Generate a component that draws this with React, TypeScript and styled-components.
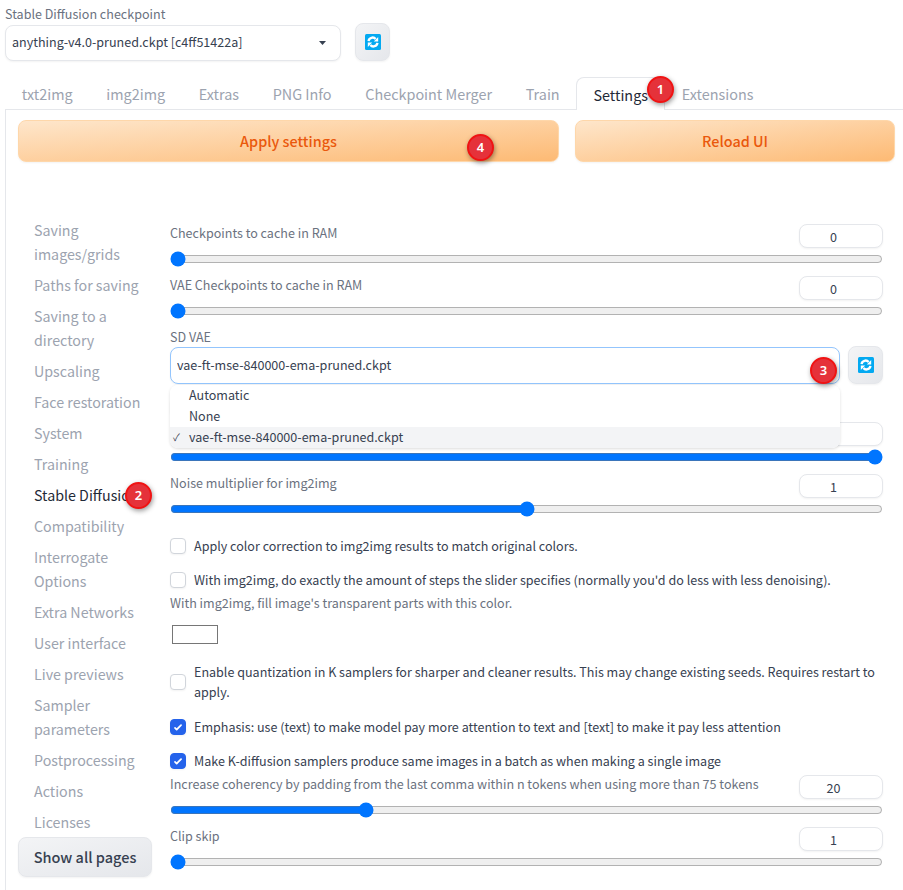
import {FunctionComponent} from 'react'
import styled, {createGlobalStyle} from 'styled-components'

const GlobalStyle = createGlobalStyle`
    html, body {
        margin: 0;
        height: 890px;
        overflow: hidden;
        background: #fff;
    }

    * {
        box-sizing: border-box;
    }

    body {
        font-family: "Noto Sans CJK SC", "Noto Sans", sans-serif;
        font-size: 12.55px;
        color: #374151;
    }
`

const Page = styled.div`
    position: relative;
    width: 903px;
    height: 890px;
    overflow: hidden;
`

const Header = styled.div`
    display: flex;
    align-items: flex-end;
    gap: 14px;
    padding: 5px 0 0 5px;
    height: 61px;
`

const FieldLabel = styled.div`
    height: 20px;
    line-height: 18px;
    color: #6b7280;
`

const CheckpointSelect = styled.select`
    display: block;
    width: 336px;
    height: 36px;
    padding: 0 30px 2px 6px;
    appearance: none;
    border: 1px solid #e5e7eb;
    border-radius: 8px;
    font: inherit;
    line-height: 20px;
    color: #374151;
    box-shadow: 0 1px 2px rgba(0, 0, 0, .05);
    background: #fff url("data:image/svg+xml,%3Csvg xmlns='http://www.w3.org/2000/svg' width='7' height='4'%3E%3Cpath d='M0 0h7L3.5 4z' fill='%23374151'/%3E%3C/svg%3E") no-repeat right 14px center;
`

const RefreshButton = styled.button`
    display: flex;
    align-items: center;
    justify-content: center;
    flex: none;
    width: 35px;
    height: 38px;
    padding: 0;
    border: 1px solid #e5e7eb;
    border-radius: 8px;
    background: linear-gradient(to bottom right, #f3f4f6, #e5e7eb);
    box-shadow: 0 1px 2px rgba(0, 0, 0, .05);
`

const TabBar = styled.div`
    display: flex;
    height: 49px;
    margin-left: 5px;
    padding: 16px 0 0 0;
    border-bottom: 1px solid #e5e7eb;
`

const Tab = styled.div<{ $active?: boolean }>`
    height: ${p => p.$active ? '33px' : '32px'};
    padding: 0 ${p => p.$active ? '16px' : '16.85px'};
    line-height: ${p => p.$active ? '33px' : '34px'};
    font-size: 14.4px;
    color: ${p => p.$active ? '#1f2937' : '#9ca3af'};
    background: #fff;
    white-space: nowrap;
    ${p => p.$active && `
        border: 1px solid #e5e7eb;
        border-bottom: none;
        border-radius: 8px 8px 0 0;
    `}
`

const Panel = styled.div`
    margin-left: 5px;
    padding: 10px 8px 0 12px;
    border-left: 1px solid #e5e7eb;
    height: 781px;
`

const ActionBar = styled.div`
    display: grid;
    grid-template-columns: 1fr 320px;
    gap: 16px;
`

const ActionButton = styled.button`
    height: 42px;
    padding: 0 0 2px;
    border: 1px solid #fed7aa;
    border-radius: 8px;
    background: linear-gradient(to bottom right, #fee6cb, #fdba74);
    color: #ea580c;
    font: inherit;
    font-size: 14.4px;
    font-weight: 500;
    box-shadow: 0 1px 2px rgba(0, 0, 0, .05);
`

const SettingsArea = styled.div`
    display: flex;
    gap: 18px;
    margin-top: 56px;
`

const Sidebar = styled.div`
    flex: none;
    width: 134px;
`

const SideList = styled.div`
    display: flex;
    flex-direction: column;
    gap: 7px;
    padding-left: 16px;
`

const SideItem = styled.div<{ $active?: boolean }>`
    line-height: 24px;
    font-size: 14.25px;
    color: ${p => p.$active ? '#1f2937' : '#9ca3af'};
    white-space: pre-line;
`

const ShowAllButton = styled.button`
    display: block;
    width: 134px;
    height: 40px;
    margin-top: 3px;
    padding: 0 0 2px;
    border: 1px solid #e5e7eb;
    border-radius: 8px;
    background: linear-gradient(to bottom right, #f3f4f6, #e5e7eb);
    color: #374151;
    font: inherit;
    font-size: 14.5px;
    font-weight: 500;
    box-shadow: 0 1px 2px rgba(0, 0, 0, .05);
`

const Content = styled.div`
    width: 713px;
    padding-top: 6px;
`

const SliderBlock = styled.div<{ $top?: number }>`
    margin-top: ${p => p.$top ?? 0}px;
`

const SliderHead = styled.div`
    display: flex;
    justify-content: space-between;
    align-items: flex-start;
    height: 27px;
`

const SliderLabel = styled.div`
    line-height: 18px;
    color: #6b7280;
    white-space: nowrap;
`

const NumberBox = styled.input`
    flex: none;
    width: 84px;
    height: 24px;
    padding: 0;
    border: 1px solid #e5e7eb;
    border-radius: 8px;
    background: #fff;
    text-align: center;
    font: inherit;
    color: #374151;
    box-shadow: 0 1px 2px rgba(0, 0, 0, .05);
`

const Slider = styled.input`
    display: block;
    width: 713px;
    height: 16px;
    margin: 0;
`

const VaeField = styled.div`
    position: relative;
    margin-top: 9px;
`

const VaeLabel = styled.div`
    height: 18px;
    line-height: 18px;
    color: #6b7280;
`

const VaeRow = styled.div`
    display: flex;
    align-items: flex-end;
    gap: 8px;
`

const VaeInput = styled.input`
    display: block;
    width: 670px;
    height: 37px;
    padding: 0 6px 2px;
    border: 1px solid #93c5fd;
    border-radius: 8px;
    font: inherit;
    color: #374151;
    outline: none;
    box-shadow: 0 1px 2px rgba(0, 0, 0, .05);
`

const DropdownMenu = styled.ul`
    position: absolute;
    z-index: 2;
    top: 57px;
    left: 0;
    width: 670px;
    margin: 0;
    padding: 0;
    list-style: none;
    background: #fff;
    border-radius: 8px;
    overflow: hidden;
    box-shadow: 0 1px 3px rgba(0, 0, 0, .14);
`

const DropdownItem = styled.li<{ $selected?: boolean }>`
    position: relative;
    height: 21px;
    padding-left: 19px;
    line-height: 20px;
    color: #374151;
    background: ${p => p.$selected ? '#f3f4f6' : '#fff'};
`

const CheckMark = styled.span`
    position: absolute;
    left: 3px;
    top: 0;
    font-size: 10px;
`

const CheckRow = styled.label<{ $top?: number }>`
    display: flex;
    align-items: center;
    gap: 8px;
    min-height: 20px;
    margin-top: ${p => p.$top ?? 0}px;
    line-height: 20px;
    color: #374151;
`

const CheckBox = styled.input`
    flex: none;
    width: 16px;
    height: 16px;
    margin: 0;
    appearance: none;
    background: #fff;
    border: 1px solid #d1d5db;
    border-radius: 4px;
    box-shadow: 0 1px 2px rgba(0, 0, 0, .05);

    &:checked {
        border-color: #2563eb;
        background: #2563eb url("data:image/svg+xml,%3Csvg xmlns='http://www.w3.org/2000/svg' viewBox='0 0 16 16'%3E%3Cpath d='M12.2 5.2a1 1 0 0 1 0 1.4l-5 5a1 1 0 0 1-1.4 0l-2-2a1 1 0 0 1 1.4-1.4l1.3 1.3 4.3-4.3a1 1 0 0 1 1.4 0z' fill='%23fff'/%3E%3C/svg%3E") center / 100% no-repeat;
    }
`

const ColorLabel = styled.div`
    height: 18px;
    margin-top: 4px;
    line-height: 18px;
    color: #6b7280;
`

const ColorSwatch = styled.div`
    width: 46px;
    height: 19px;
    margin: 13px 0 0 2px;
    border: 1px solid #767676;
    background: #fff;
`

const Badge = styled.div<{ $x: number, $y: number }>`
    position: absolute;
    z-index: 5;
    left: ${p => p.$x}px;
    top: ${p => p.$y}px;
    width: 27px;
    height: 27px;
    border: 2px solid #f01313;
    border-radius: 50%;
    background: #e5323a;
    color: #fff;
    font-family: "Noto Sans", sans-serif;
    font-size: 13px;
    font-weight: 600;
    line-height: 23px;
    text-align: center;
    box-shadow: 1px 2px 5px rgba(0, 0, 0, .4);
`

const RefreshIcon: FunctionComponent = () => (
    <svg width="16" height="16" viewBox="0 0 16 16">
        <rect width="16" height="16" rx="1.5" fill="#03a9f1"/>
        <g fill="none" stroke="#fff" strokeWidth="2.4">
            <path d="M3.6 7.2A4 4 0 0 1 10.6 5"/>
            <path d="M12.4 8.8A4 4 0 0 1 5.4 11"/>
        </g>
        <path d="M8.8 7.4h4.4V3z" fill="#fff"/>
        <path d="M7.2 8.6H2.8V13z" fill="#fff"/>
    </svg>
)

interface RangeRowProps {
    label?: string
    value: number
    min?: number
    max: number
    step?: number
    top?: number
}

const RangeRow: FunctionComponent<RangeRowProps> = ({label, value, min = 0, max, step = 1, top}) => (
    <SliderBlock $top={top}>
        <SliderHead>
            <SliderLabel>{label}</SliderLabel>
            <NumberBox type="number" readOnly min={min} max={max} step={step} value={value}/>
        </SliderHead>
        <Slider type="range" readOnly min={min} max={max} step={step} value={value}/>
    </SliderBlock>
)

const sideItems = [
    'Saving\nimages/grids',
    'Paths for saving',
    'Saving to a\ndirectory',
    'Upscaling',
    'Face restoration',
    'System',
    'Training',
    'Stable Diffusion',
    'Compatibility',
    'Interrogate\nOptions',
    'Extra Networks',
    'User interface',
    'Live previews',
    'Sampler\nparameters',
    'Postprocessing',
    'Actions',
    'Licenses',
]

const tabs = ['txt2img', 'img2img', 'Extras', 'PNG Info', 'Checkpoint Merger', 'Train', 'Settings', 'Extensions']

const App: FunctionComponent = () => {
    return (
        <Page>
            <GlobalStyle/>
            <Header>
                <div>
                    <FieldLabel>Stable Diffusion checkpoint</FieldLabel>
                    <CheckpointSelect defaultValue="anything">
                        <option value="anything">anything-v4.0-pruned.ckpt [c4ff51422a]</option>
                    </CheckpointSelect>
                </div>
                <RefreshButton><RefreshIcon/></RefreshButton>
            </Header>

            <TabBar>
                {tabs.map(tab => <Tab key={tab} $active={tab === 'Settings'}>{tab}</Tab>)}
            </TabBar>

            <Panel>
                <ActionBar>
                    <ActionButton>Apply settings</ActionButton>
                    <ActionButton>Reload UI</ActionButton>
                </ActionBar>

                <SettingsArea>
                    <Sidebar>
                        <SideList>
                            {sideItems.map(item => (
                                <SideItem key={item} $active={item === 'Stable Diffusion'}>{item}</SideItem>
                            ))}
                        </SideList>
                        <ShowAllButton>Show all pages</ShowAllButton>
                    </Sidebar>

                    <Content>
                        <RangeRow label="Checkpoints to cache in RAM" value={0} max={10}/>
                        <RangeRow label="VAE Checkpoints to cache in RAM" value={0} max={10} top={9}/>

                        <VaeField>
                            <VaeLabel>SD VAE</VaeLabel>
                            <VaeRow>
                                <VaeInput type="text" readOnly value="vae-ft-mse-840000-ema-pruned.ckpt"/>
                                <RefreshButton><RefreshIcon/></RefreshButton>
                            </VaeRow>
                            <DropdownMenu>
                                <DropdownItem>Automatic</DropdownItem>
                                <DropdownItem>None</DropdownItem>
                                <DropdownItem $selected><CheckMark>✓</CheckMark>vae-ft-mse-840000-ema-pruned.ckpt</DropdownItem>
                            </DropdownMenu>
                        </VaeField>

                        {/* these two rows sit behind the open dropdown, their labels can't be seen */}
                        <CheckRow $top={13}>
                            <CheckBox type="checkbox" readOnly checked/>
                        </CheckRow>
                        <RangeRow value={1} max={1} step={0.01} top={5}/>
                        <RangeRow label="Noise multiplier for img2img" value={1} min={0.5} max={1.5} step={0.01} top={9}/>

                        <CheckRow $top={19}>
                            <CheckBox type="checkbox" readOnly/>
                            Apply color correction to img2img results to match original colors.
                        </CheckRow>
                        <CheckRow $top={14}>
                            <CheckBox type="checkbox" readOnly/>
                            With img2img, do exactly the amount of steps the slider specifies (normally you'd do less with less denoising).
                        </CheckRow>
                        <ColorLabel>With img2img, fill image's transparent parts with this color.</ColorLabel>
                        <ColorSwatch/>
                        <CheckRow $top={18}>
                            <CheckBox type="checkbox" readOnly/>
                            Enable quantization in K samplers for sharper and cleaner results. This may change existing seeds. Requires restart to apply.
                        </CheckRow>
                        <CheckRow $top={15}>
                            <CheckBox type="checkbox" readOnly checked/>
                            Emphasis: use (text) to make model pay more attention to text and [text] to make it pay less attention
                        </CheckRow>
                        <CheckRow $top={14}>
                            <CheckBox type="checkbox" readOnly checked/>
                            Make K-diffusion samplers produce same images in a batch as when making a single image
                        </CheckRow>
                        <RangeRow label="Increase coherency by padding from the last comma within n tokens when using more than 75 tokens" value={20} max={74} top={4}/>
                        <RangeRow label="Clip skip" value={1} min={1} max={12} top={9}/>
                    </Content>
                </SettingsArea>
            </Panel>

            <Badge $x={647} $y={76}>1</Badge>
            <Badge $x={125} $y={482}>2</Badge>
            <Badge $x={810} $y={357}>3</Badge>
            <Badge $x={467} $y={134}>4</Badge>
        </Page>
    )
}

export default App
